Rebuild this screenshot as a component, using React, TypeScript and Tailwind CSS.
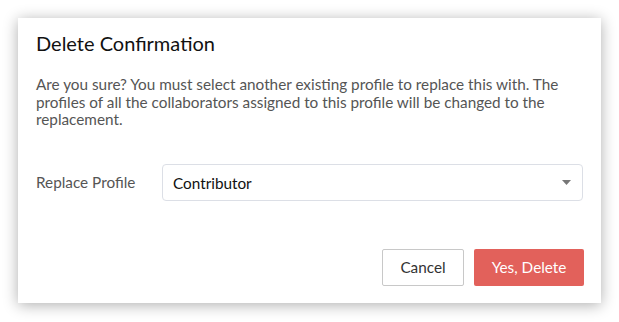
import React from 'react';

const App: React.FC = () => {
  return (
    <div className="w-[619px] h-[322px] bg-white pt-[18px] pl-[18px] font-['Lato','Liberation_Sans',sans-serif]">
      <div className="w-[583px] h-[285px] bg-white shadow-[0_2px_14px_rgba(0,0,0,0.32)] px-[18px] pt-[12px] pb-[17px] flex flex-col">
        <h2 className="text-[20px] leading-[26px] text-[#111]">Delete Confirmation</h2>

        <p className="mt-[20px] text-[15.3px] leading-[17.5px] text-[#555]">
          Are you sure? You must select another existing profile to replace this with. The profiles of all the collaborators assigned to this profile will be changed to the replacement.
        </p>

        <div className="mt-[35px] flex items-start">
          <label className="w-[126px] pt-[8px] text-[15.3px] leading-[20px] text-[#555]">Replace Profile</label>
          <div className="w-[421px] h-[37px] border border-[#dcdfe6] rounded-[4px] flex items-center justify-between pl-[10px] pr-[11px]">
            <span className="text-[15.3px] leading-[20px] text-[#111] pt-[1px]">Contributor</span>
            <svg width="9" height="5" viewBox="0 0 9 5">
              <path d="M0 0 L9 0 L4.5 5 Z" fill="#777" />
            </svg>
          </div>
        </div>

        <div className="mt-auto flex justify-end gap-[10px] -mr-[1px]">
          <button className="w-[82px] h-[37px] border border-[#c8c8c8] rounded-[2px] bg-white text-[15.3px] text-[#333]">Cancel</button>
          <button className="w-[110px] h-[37px] rounded-[2px] bg-[#e2615b] text-[15.3px] text-white">Yes, Delete</button>
        </div>
      </div>
    </div>
  );
};

export default App;
